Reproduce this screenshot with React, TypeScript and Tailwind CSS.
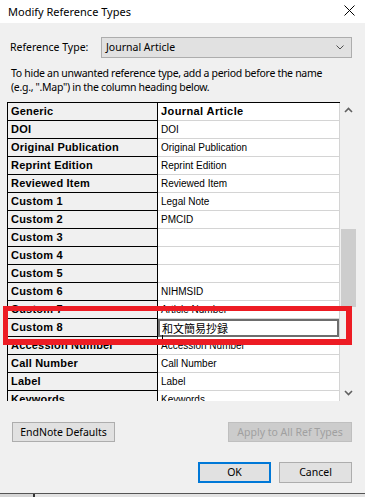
import React from "react";

const rows: [string, string][] = [
  ["Generic", "Journal Article"],
  ["DOI", "DOI"],
  ["Original Publication", "Original Publication"],
  ["Reprint Edition", "Reprint Edition"],
  ["Reviewed Item", "Reviewed Item"],
  ["Custom 1", "Legal Note"],
  ["Custom 2", "PMCID"],
  ["Custom 3", ""],
  ["Custom 4", ""],
  ["Custom 5", ""],
  ["Custom 6", "NIHMSID"],
  ["Custom 7", "Article Number"],
  ["Custom 8", "和文簡易抄録"],
  ["Accession Number", "Accession Number"],
  ["Call Number", "Call Number"],
  ["Label", "Label"],
  ["Keywords", "Keywords"],
];

function Chevron({ up }: { up?: boolean }) {
  return (
    <svg width="9" height="6" viewBox="0 0 9 6">
      <polyline
        points={up ? "1,5 4.5,1.5 8,5" : "1,1 4.5,4.5 8,1"}
        fill="none"
        stroke="#606060"
        strokeWidth="1.6"
      />
    </svg>
  );
}

export default function App() {
  return (
    <div className="relative w-[365px] h-[497px] overflow-hidden bg-[#f0f0f0] font-['Noto_Sans',sans-serif] text-[10.5px] text-black">
      {/* title bar */}
      <div className="h-[23px] bg-white flex items-center justify-between pl-[8px] pr-[10px]">
        <span className="text-[11px] leading-none -mt-[1px]">Modify Reference Types</span>
        <svg width="11" height="11" viewBox="0 0 11 11" className="-mt-[3px]">
          <path d="M0.5 0.5 L10.5 10.5 M10.5 0.5 L0.5 10.5" stroke="#000" strokeWidth="1" />
        </svg>
      </div>

      {/* reference type */}
      <div className="flex items-center mt-[14px] pl-[10px] h-[21px]">
        <span className="w-[91px]">Reference Type:</span>
        <div className="w-[251px] h-[21px] bg-[#e1e1e1] border border-[#adadad] flex items-center justify-between pl-[4px] pr-[7px]">
          <span>Journal Article</span>
          <svg width="8" height="5" viewBox="0 0 8 5">
            <polyline points="0.5,0.5 4,4 7.5,0.5" fill="none" stroke="#505050" strokeWidth="1" />
          </svg>
        </div>
      </div>

      {/* help text */}
      <p className="mt-[8px] pl-[11px] leading-[14px] h-[28px] whitespace-nowrap tracking-[-0.3px]">
        To hide an unwanted reference type, add a period before the name
        <br />
        (e.g., ".Map") in the column heading below.
      </p>

      {/* table */}
      <div className="ml-[7px] mt-[8px] w-[350px] h-[299px] flex overflow-hidden font-['Liberation_Sans',sans-serif]">
        <div className="w-[333px] border-t border-[#000]">
          {rows.map(([name, value], i) => (
            <div key={name} className="flex h-[18px]">
              <div className="w-[151px] h-[18px] border-l border-r border-b border-black bg-[#f0f0f0] pl-[3px] text-[11px] font-bold tracking-[0.2px] leading-[17px]">
                {name}
              </div>
              <div
                className={`relative flex-1 h-[18px] bg-white border-b border-r border-[#d4d4d4] pl-[3px] leading-[17px] ${
                  i === 0 ? "text-[11px] font-bold tracking-[0.4px]" : "text-[10px]"
                }`}
              >
                {i === 12 ? (
                  <div className="absolute left-0 right-0 top-0 -bottom-px bg-white border-2 border-[#6d6d6d] pl-[2px] text-[11px] leading-[14px] font-['Noto_Sans_CJK_JP',sans-serif]">
                    {value}
                  </div>
                ) : (
                  value
                )}
              </div>
            </div>
          ))}
        </div>
        {/* scrollbar */}
        <div className="relative w-[17px] h-full flex flex-col items-center justify-between py-[5px]">
          <Chevron up />
          <div className="absolute left-[1px] top-[127px] w-[15px] h-[78px] bg-[#cdcdcd]" />
          <Chevron />
        </div>
      </div>

      {/* caret under edit box */}
      <div className="absolute left-[162px] top-[335px] w-px h-[5px] bg-black" />

      {/* annotation box */}
      <div className="absolute left-[3px] top-[306px] w-[349px] h-[39px] border-t-[5px] border-l-[5px] border-r-[6px] border-b-[6px] border-[#ed1c24]" />

      {/* buttons */}
      <div className="flex justify-between mt-[21px] pl-[12px] pr-[13px]">
        <button className="w-[103px] h-[20px] bg-[#e1e1e1] border border-[#adadad] leading-none">
          EndNote Defaults
        </button>
        <button className="w-[124px] h-[20px] bg-[#cccccc] border border-[#bfbfbf] text-[#a0a0a0] leading-none">
          Apply to All Ref Types
        </button>
      </div>
      <div className="flex justify-end gap-[8px] mt-[20px] pr-[13px]">
        <button className="w-[73px] h-[21px] bg-[#e1e1e1] border-2 border-[#0078d7] leading-none">OK</button>
        <button className="w-[73px] h-[21px] bg-[#e1e1e1] border border-[#adadad] leading-none">Cancel</button>
      </div>

      {/* window bottom edge */}
      <div className="absolute left-0 right-0 top-[493px] h-px bg-[#555555]" />
      <div className="absolute left-0 right-0 top-[494px] h-[3px] bg-[#e3e3e3] flex">
        <div className="w-[33px] bg-[#d6d6d6]" />
        <div className="w-[2px] bg-[#333333]" />
      </div>
    </div>
  );
}
